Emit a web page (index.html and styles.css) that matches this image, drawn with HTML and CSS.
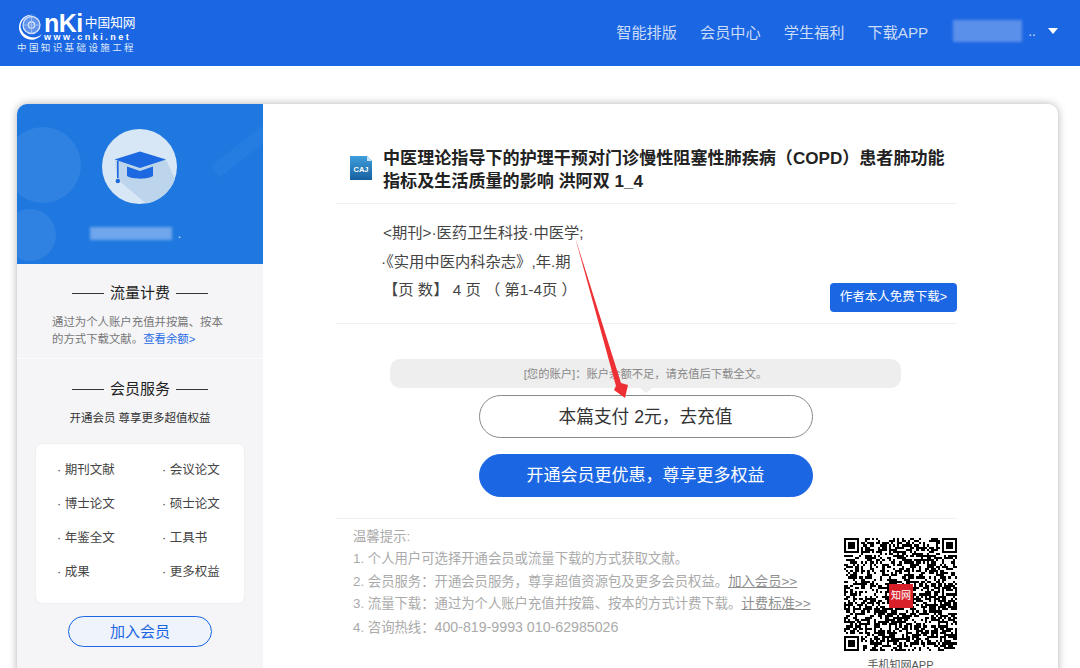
FILE: index.html
```html
<!DOCTYPE html>
<html>
	<head>
		<meta charset="utf-8" />
		<title>知网下载</title>
		<link rel="stylesheet" href="styles.css">
	</head>
	<body>
		<header class="topbar">
			<a class="logo" href="javascript:">
				<span class="logo-top">
					<svg class="logo-mark" width="26" height="27" viewBox="0 0 26 27">
						<path d="M20 3A12.500 12.500 0 1 0 25 21A13 13 0 0 1 3.500 14A12 12 0 0 1 20 3Z" fill="#fff"/>
						<circle cx="14.500" cy="12" r="8.500" fill="#5f93ec" stroke="#d7e4fb" stroke-width="1.300"/>
						<circle cx="14.500" cy="12" r="3.200" fill="none" stroke="#e4edfc" stroke-width="1.200"/>
						<path d="M14.500 3.500V20.500M6 12H23" stroke="#a9c6f5" stroke-width=".8"/>
					</svg>
					<span class="logo-words">
						<span class="logo-line"><b>nKi</b><i>中国知网</i></span>
						<em>www.cnki.net</em>
					</span>
				</span>
				<small>中国知识基础设施工程</small>
			</a>
			<nav class="nav">
				<a href="javascript:">智能排版</a>
				<a href="javascript:">会员中心</a>
				<a href="javascript:">学生福利</a>
				<a href="javascript:">下载APP</a>
				<span class="user"><span class="blur-name"></span>..<span class="caret"></span></span>
			</nav>
		</header>

		<article class="card">
			<aside class="side">
				<div class="profile">
					<span class="band"></span>
					<svg class="avatar" width="75" height="75" viewBox="0 0 75 75">
						<circle cx="37.500" cy="37.500" r="37.500" fill="#d8e7f5"/>
						<path d="M13 32L37 24L64 31L73 50A37.500 37.500 0 0 1 44 74.500L15 50Z" fill="#bcd5ec"/>
						<path d="M12.500 30.500L38 22.500L64 30.500L38 39Z" fill="#1c68e0"/>
						<path d="M25 37.500L38 42L51 37.500V47C46 50.500 30 50.500 25 47Z" fill="#1c68e0"/>
						<rect x="15" y="32" width="1.600" height="17" fill="#1c68e0"/>
						<circle cx="15.800" cy="52" r="2.200" fill="#1c68e0"/>
					</svg>
					<div class="profile-name"><span class="blur-name small"></span><span class="dot">.</span></div>
				</div>
				<section class="side-block flow">
					<h3 class="side-title">流量计费</h3>
					<p class="flow-text">通过为个人账户充值并按篇、按本的方式下载文献。<a href="javascript:">查看余额&gt;</a></p>
				</section>
				<section class="side-block member">
					<h3 class="side-title">会员服务</h3>
					<p class="member-text">开通会员 尊享更多超值权益</p>
					<ul class="rights">
						<li>期刊文献</li>
						<li>会议论文</li>
						<li>博士论文</li>
						<li>硕士论文</li>
						<li>年鉴全文</li>
						<li>工具书</li>
						<li>成果</li>
						<li>更多权益</li>
					</ul>
					<a class="join" href="javascript:">加入会员</a>
				</section>
			</aside>

			<main class="main">
				<div class="doc-title">
					<svg class="caj" width="24" height="26" viewBox="0 0 24 26">
						<defs>
							<linearGradient id="cajFill" x1="0" y1="0" x2="0" y2="1">
								<stop offset="0" stop-color="#3f9fdc"/>
								<stop offset="1" stop-color="#17609f"/>
							</linearGradient>
						</defs>
						<path d="M1 1H18L23 6V25H1Z" fill="url(#cajFill)"/>
						<path d="M18 1L23 6H18Z" fill="#c8e2f3"/>
						<text x="12" y="17" text-anchor="middle">CAJ</text>
					</svg>
					<h1>中医理论指导下的护理干预对门诊慢性阻塞性肺疾病（COPD）患者肺功能指标及生活质量的影响 洪阿双 1_4</h1>
				</div>
				<div class="doc-meta">
					<div class="meta-lines">
						<p>&lt;期刊&gt;·医药卫生科技·中医学;</p>
						<p class="pull">·《实用中医内科杂志》,年.期</p>
						<p>【页 数】 4 页 （ 第1-4页 ）</p>
					</div>
					<a class="author-btn" href="javascript:">作者本人免费下载&gt;</a>
				</div>
				<div class="pay">
					<p class="notice">[您的账户]：账户余额不足，请充值后下载全文。</p>
					<a class="pay-btn" href="javascript:">本篇支付 2元，去充值</a>
					<a class="pay-btn primary" href="javascript:">开通会员更优惠，尊享更多权益</a>
				</div>
				<div class="tips">
					<div class="tips-text">
						<p>温馨提示:</p>
						<p>1. 个人用户可选择开通会员或流量下载的方式获取文献。</p>
						<p>2. 会员服务：开通会员服务，尊享超值资源包及更多会员权益。<a href="javascript:">加入会员&gt;&gt;</a></p>
						<p>3. 流量下载：通过为个人账户充值并按篇、按本的方式计费下载。<a href="javascript:">计费标准&gt;&gt;</a></p>
						<p>4. 咨询热线：<span class="phone">400-819-9993 010-62985026</span></p>
					</div>
					<figure class="qr">
						<div class="qr-box">
							<svg id="qrCode" width="113" height="113" viewBox="0 0 53 53" shape-rendering="crispEdges"></svg>
							<span class="qr-badge">知网</span>
						</div>
						<figcaption>手机知网APP</figcaption>
					</figure>
				</div>
			</main>
		</article>

		<svg class="arrow" width="56" height="163" viewBox="0 0 56 163">
			<path d="M1 0L47 146L54 148L51 161L40 153L42 149Z" fill="#ee2f33"/>
		</svg>
		<script src="script.js"></script>
	</body>
</html>
```

FILE: styles.css
```css
*{margin: 0;padding: 0;box-sizing: border-box;}
html,body{height: 100%;}
body{
	font-family: "Liberation Sans","Noto Sans CJK SC",sans-serif;
	background: #fff;
	overflow: hidden;
	position: relative;
	color: #333;
}
a{
	text-decoration: none;
	color: inherit;
}
li{
	list-style: none;
}

/* top bar */
.topbar{
	height: 66px;
	background: #1a66e3;
	display: flex;
	align-items: center;
	justify-content: space-between;
	padding: 0 22px 2px 17px;
}
.logo{
	display: flex;
	flex-direction: column;
	width: 120px;
	color: #fff;
}
.logo-top{
	display: flex;
	align-items: flex-start;
	height: 29px;
}
.logo-mark{
	flex: none;
	margin-top: 2px;
}
.logo-words{
	display: flex;
	flex-direction: column;
	margin: 2px 0 0 1px;
}
.logo-line{
	display: flex;
	align-items: center;
	height: 20px;
}
.logo-line b{
	font-size: 25px;
	line-height: 20px;
	letter-spacing: -.5px;
}
.logo-line i{
	font-style: normal;
	font-size: 12.700px;
	line-height: 20px;
	margin-left: 2px;
	white-space: nowrap;
}
.logo-words em{
	font-style: normal;
	font-size: 9px;
	line-height: 8px;
	font-weight: bold;
	letter-spacing: 2.500px;
	white-space: nowrap;
}
.logo small{
	font-size: 9.500px;
	line-height: 11px;
	margin-top: 2px;
	white-space: nowrap;
	letter-spacing: 2.400px;
	color: #dfe9fb;
}
.nav{
	display: flex;
	align-items: center;
	gap: 23px;
	margin-bottom: 2px;
	font-size: 15.200px;
	color: #cbdcf8;
}
.user{
	display: flex;
	align-items: center;
	margin-left: 2px;
	font-size: 14px;
}
.blur-name{
	display: block;
	width: 69px;
	height: 22px;
	margin-right: 6px;
	background: #5b90ea;
	filter: blur(1.500px);
}
.blur-name.small{
	width: 82px;
	height: 13px;
	margin-right: 0;
	background: #6fa6ec;
}
.caret{
	width: 0;
	height: 0;
	margin-left: 12px;
	border: 5.500px solid transparent;
	border-top: 6px solid #fff;
	border-bottom: 0;
}

/* card */
.card{
	display: flex;
	margin: 38px 22px 0 17px;
	height: 640px;
	background: #fff;
	border-radius: 10px;
	box-shadow: 0 0 8px rgba(0,0,0,.3);
	overflow: hidden;
}

/* left column */
.side{
	flex: none;
	width: 246px;
	background: #f5f5f7;
}
.profile{
	height: 160px;
	padding: 25px 1px 0 0;
	background: #1e78e0;
	position: relative;
	overflow: hidden;
	text-align: center;
}
.profile::before{
	content: "";
	position: absolute;
	left: -12px;
	top: 23px;
	width: 76px;
	height: 76px;
	border-radius: 50%;
	background: rgba(255,255,255,.08);
}
.profile::after{
	content: "";
	position: absolute;
	left: -13px;
	top: 105px;
	width: 52px;
	height: 52px;
	border-radius: 50%;
	background: rgba(255,255,255,.08);
}
.band{
	position: absolute;
	left: 190px;
	top: 36px;
	width: 80px;
	height: 14px;
	background: rgba(255,255,255,.04);
	transform: rotate(-38deg);
}
.avatar{
	display: block;
	margin: 0 auto;
	position: relative;
	z-index: 1;
}
.profile-name{
	display: flex;
	align-items: flex-end;
	justify-content: center;
	margin: 22px 0 0 0;
	height: 14px;
	padding-right: 8px;
	position: relative;
	z-index: 1;
}
.profile-name .dot{
	color: #dcebfb;
	font-size: 12px;
	line-height: 12px;
	margin-left: 6px;
}
.side-title{
	display: flex;
	align-items: center;
	justify-content: center;
	gap: 6px;
	font-size: 15px;
	font-weight: normal;
	line-height: 22px;
	color: #222;
}
.side-title::before,
.side-title::after{
	content: "";
	width: 32px;
	height: 1px;
	background: #333;
}
.flow{
	height: 95px;
	padding: 18px 35px 0;
	border-bottom: 1px solid #fbfbfc;
}
.flow-text{
	margin-top: 10px;
	font-size: 11.400px;
	line-height: 16.500px;
	color: #777;
}
.flow-text a{
	color: #2a6ee6;
}
.member{
	padding: 19px 18px 0;
}
.member-text{
	margin-top: 9px;
	font-size: 11.500px;
	line-height: 18px;
	color: #333;
	text-align: center;
}
.rights{
	display: grid;
	grid-template-columns: 105px 1fr;
	grid-auto-rows: 34px;
	align-items: center;
	height: 161px;
	margin-top: 16px;
	padding: 7px 0 0 21px;
	background: #fff;
	border: 1px solid #f0f0f2;
	border-radius: 8px;
	font-size: 12.500px;
	color: #444;
}
.rights li::before{
	content: "· ";
}
.join{
	display: block;
	width: 144px;
	height: 31px;
	margin: 12px auto 0;
	border: 1px solid #1a66e3;
	border-radius: 16px;
	background: #eef3fc;
	color: #1a66e3;
	font-size: 15px;
	line-height: 29px;
	text-align: center;
}

/* right column */
.main{
	flex: 1;
	padding: 43px 101px 0 73px;
}
.doc-title{
	display: flex;
	align-items: flex-start;
	padding: 0 0 10px 13px;
	border-bottom: 1px solid #f1f1f1;
}
.caj{
	flex: none;
	margin: 8px 10px 0 0;
}
.caj text{
	font-size: 7.500px;
	font-weight: bold;
	fill: #fff;
}
.doc-title h1{
	font-size: 17.080px;
	line-height: 23px;
	color: #222;
}
.doc-meta{
	display: flex;
	align-items: flex-end;
	justify-content: space-between;
	padding: 15px 0 11px 47px;
	border-bottom: 1px solid #f1f1f1;
}
.meta-lines{
	font-size: 15.300px;
	line-height: 28.500px;
	color: #444;
	padding-bottom: 7px;
}
.pull{
	margin-left: -2px;
}
.author-btn{
	width: 127px;
	height: 29px;
	background: #1a66e3;
	border-radius: 4px;
	color: #fff;
	font-size: 12.500px;
	line-height: 29px;
	text-align: center;
}
.pay{
	display: flex;
	flex-direction: column;
	align-items: center;
	padding: 35px 2px 0 0;
	height: 195px;
	border-bottom: 1px solid #f1f1f1;
}
.notice{
	position: relative;
	width: 511px;
	height: 29px;
	margin-bottom: 7px;
	background: #eee;
	border-radius: 10px;
	color: #888;
	font-size: 11.300px;
	line-height: 30px;
	text-align: center;
}
.notice::after{
	content: "";
	position: absolute;
	left: 50%;
	bottom: -5px;
	margin-left: -6px;
	border: 6px solid transparent;
	border-top: 5px solid #eee;
	border-bottom: 0;
}
.pay-btn{
	width: 334px;
	height: 43px;
	margin-bottom: 16px;
	border: 1px solid #8a8a8a;
	border-radius: 22px;
	font-size: 17.700px;
	line-height: 42px;
	text-align: center;
	color: #333;
}
.pay-btn.primary{
	background: #1a66e3;
	border-color: #1a66e3;
	color: #fff;
	font-size: 17px;
}
.tips{
	display: flex;
	justify-content: space-between;
	padding: 7px 0 0 17px;
}
.tips-text{
	font-size: 13.350px;
	line-height: 22.500px;
	color: #aaa;
	white-space: nowrap;
}
.tips-text a{
	color: #8f8f8f;
	text-decoration: underline;
}
.phone{
	font-size: 14.200px;
}
.qr{
	flex: none;
	width: 113px;
	margin-top: 12px;
	text-align: center;
}
.qr-box{
	position: relative;
	height: 113px;
}
.qr-box svg{
	display: block;
}
.qr-badge{
	position: absolute;
	left: 45px;
	top: 46px;
	width: 24px;
	height: 24px;
	background: #d8202a;
	color: #fff;
	font-size: 10px;
	line-height: 24px;
	white-space: nowrap;
}
.qr figcaption{
	margin-top: 7px;
	font-size: 11px;
	line-height: 14px;
	color: #555;
}

/* red mark drawn over the page */
.arrow{
	position: absolute;
	left: 574px;
	top: 237px;
}
```

FILE: script.js
```js
// fill the qr box with modules
var oQr=document.getElementById('qrCode');
var size=53;
var seed=20;
var sHtml='';

function rnd(){
	seed=(seed*1103515245+12345)%2147483648;
	return (seed>>8)%100;
}
function inFinder(x,y){
	return (x<8&&y<8)||(x>=size-8&&y<8)||(x<8&&y>=size-8);
}
function finder(x,y){
	return "<path fill='#000' fill-rule='evenodd' d='M"+x+" "+y+"h7v7h-7zM"+(x+1)+" "+(y+1)+"v5h5v-5z'/>"
		+"<rect fill='#000' x='"+(x+2)+"' y='"+(y+2)+"' width='3' height='3'/>";
}

for(var y=0;y<size;y++){
	for(var x=0;x<size;x++){
		if(!inFinder(x,y)&&rnd()<52){
			sHtml+="<rect fill='#000' x='"+x+"' y='"+y+"' width='1' height='1'/>";
		}
	}
}
sHtml+=finder(0,0)+finder(size-7,0)+finder(0,size-7);
oQr.innerHTML=sHtml;
```
